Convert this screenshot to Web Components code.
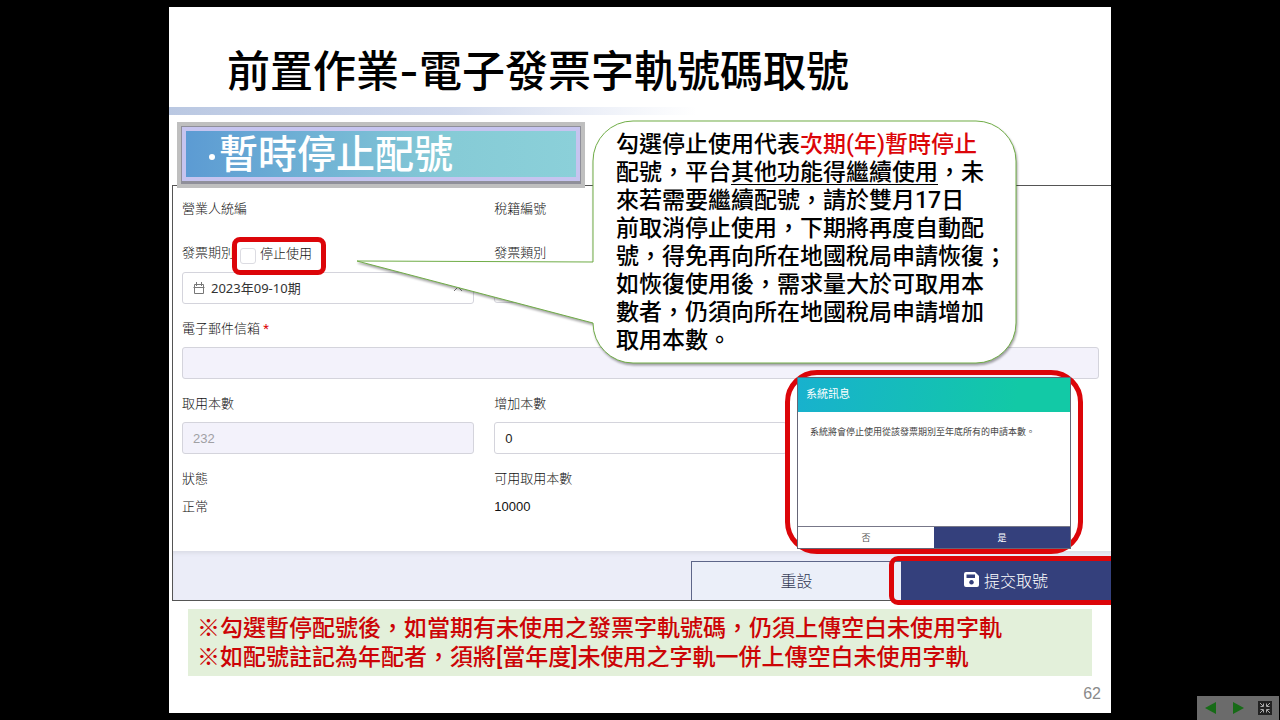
<!DOCTYPE html>
<html lang="zh-Hant">
<head>
<meta charset="utf-8">
<title>前置作業-電子發票字軌號碼取號</title>
<style>
    :root {
        --red: #dc0509;
        --navy: #34407c;
        --line: #d4d4dc;
        --sans: "Liberation Sans", "Noto Sans CJK TC", sans-serif;
        --ui: Roboto, "Noto Sans CJK TC", sans-serif;
        --display: Inter, "Noto Sans CJK TC", sans-serif;
    }

    html, body {
        height: 100%;
    }

    body {
        margin: 0;
        background: #000;
        font-family: var(--ui);
    }
</style>
</head>
<body>
<slide-page number="62">
    <span slot="title">前置作業-電子發票字軌號碼取號</span>
    <section-banner slot="banner">暫時停止配號</section-banner>
    <invoice-form slot="form"></invoice-form>
    <call-out slot="overlay">勾選停止使用代表<em>次期(年)暫時停止</em><br>配號，平台<u>其他功能得繼續使用</u>，未<br>來若需要繼續配號，請於雙月17日<br>前取消停止使用，下期將再度自動配<br>號，得免再向所在地國稅局申請恢復；<br>如恢復使用後，需求量大於可取用本<br>數者，仍須向所在地國稅局申請增加<br>取用本數。</call-out>
    <message-dialog slot="overlay">
        <span slot="heading">系統訊息</span>
        系統將會停止使用從該發票期別至年底所有的申請本數。
    </message-dialog>
    <note-box slot="notes">
        <div>※勾選暫停配號後，如當期有未使用之發票字軌號碼，仍須上傳空白未使用字軌</div>
        <div>※如配號註記為年配者，須將[當年度]未使用之字軌一併上傳空白未使用字軌</div>
    </note-box>
</slide-page>
<player-bar></player-bar>

<script>
    class BaseElement extends HTMLElement {
        constructor() {
            super();
            this.attachShadow({mode: 'open'});
            this.shadowRoot.innerHTML = this.render();
        }

        render() {
            return '<slot></slot>';
        }
    }

    class SlidePage extends BaseElement {
        static get observedAttributes() {
            return ['number'];
        }

        attributeChangedCallback(attrName, oldVal, newVal) {
            this.shadowRoot.querySelector('footer').textContent = newVal;
        }

        render() {
            return `
            <style>
                :host {
                    display: block;
                    box-sizing: border-box;
                    min-height: 100%;
                    padding: 7px 169px;
                }

                main {
                    position: relative;
                    overflow: hidden;
                    box-sizing: border-box;
                    min-height: 706px;
                    background: #fff;
                }

                h1 {
                    margin: 0;
                    padding: 32px 58px 4px;
                    font-family: var(--display);
                    font-size: 43px;
                    font-weight: 500;
                    line-height: 64px;
                }

                .rule {
                    height: 8px;
                    background: linear-gradient(to right, #bac8e2, #d3dbee 30%, #fff 56%);
                }

                .banner {
                    position: relative;
                    z-index: 1;
                    margin: 7px 0 -3px 8px;
                }

                .form {
                    margin-left: 3px;
                }

                .notes {
                    margin: 8px 19px 0;
                }

                footer {
                    padding: 8px 10px 0;
                    font-family: var(--sans);
                    font-size: 16px;
                    line-height: 20px;
                    text-align: right;
                    color: #8a8a8a;
                }
            </style>
            <main>
                <h1><slot name="title"></slot></h1>
                <div class="rule"></div>
                <div class="banner"><slot name="banner"></slot></div>
                <div class="form"><slot name="form"></slot></div>
                <div class="notes"><slot name="notes"></slot></div>
                <footer></footer>
                <slot name="overlay"></slot>
            </main>`;
        }
    }

    class SectionBanner extends BaseElement {
        render() {
            return `
            <style>
                :host {
                    display: block;
                    box-sizing: border-box;
                    width: 408px;
                    border: 4px solid #bfbfbf;
                    background: #8f8f9a;
                    padding: 1px 1px 3px;
                }

                h2 {
                    margin: 0;
                    border: 4px solid #c6c4ef;
                    padding: 2px 0 0 23px;
                    background: linear-gradient(to right, #5c9bd3, #86cbd6 68%, #8bd0d9);
                    font-size: 39px;
                    font-weight: 500;
                    line-height: 44px;
                    color: #fff;
                    display: flex;
                    align-items: center;
                    gap: 4px;
                }

                i {
                    width: 6px;
                    height: 6px;
                    margin-top: 4px;
                    border-radius: 50%;
                    background: #fff;
                }
            </style>
            <h2><i></i><slot></slot></h2>`;
        }
    }

    class FieldBox extends BaseElement {
        static get observedAttributes() {
            return ['label', 'value', 'text', 'disabled', 'required'];
        }

        attributeChangedCallback() {
            const label = this.shadowRoot.querySelector('label');
            const input = this.shadowRoot.querySelector('input');

            label.firstChild.textContent = this.getAttribute('label');
            input.value = this.getAttribute('value') || '';
            input.disabled = this.hasAttribute('disabled');
            this.shadowRoot.querySelector('output').textContent = this.getAttribute('text') || '';
        }

        render() {
            return `
            <style>
                :host {
                    display: block;
                    font-size: 13px;
                    line-height: 20px;
                    font-weight: 300;
                    color: #111;
                }

                label {
                    display: block;
                    margin-bottom: 8px;
                }

                label b {
                    display: none;
                    color: var(--red);
                    font-weight: 400;
                }

                :host([required]) label b {
                    display: inline;
                }

                input {
                    display: block;
                    box-sizing: border-box;
                    width: 100%;
                    height: 32px;
                    padding: 0 10px;
                    border: 1px solid var(--line);
                    border-radius: 3px;
                    background: #fff;
                    font: 13px var(--sans);
                    color: #222;
                }

                input:disabled {
                    background: #f3f2fb;
                    color: #a0a0a4;
                }

                output {
                    display: none;
                    font: 300 13px/20px var(--sans);
                }

                :host([text]) output {
                    display: block;
                }

                :host([text]) input,
                :host([plain]) input {
                    display: none;
                }
            </style>
            <label for="box"><span></span> <b>*</b></label>
            <input id="box">
            <output for="box"></output>`;
        }
    }

    class PeriodSelect extends BaseElement {
        render() {
            return `
            <style>
                :host {
                    display: block;
                    position: relative;
                    font-size: 13px;
                    line-height: 20px;
                    font-weight: 300;
                    color: #111;
                }

                .label {
                    display: block;
                    margin-bottom: 9px;
                }

                .box {
                    display: flex;
                    align-items: center;
                    gap: 6px;
                    box-sizing: border-box;
                    height: 32px;
                    padding: 0 10px;
                    border: 1px solid var(--line);
                    border-radius: 3px;
                }

                select {
                    flex: 1;
                    appearance: none;
                    border: 0;
                    padding: 0;
                    background: none;
                    font: 400 13px "Noto Sans", "Noto Sans CJK TC", sans-serif;
                    color: #333;
                }

                svg {
                    fill: none;
                    stroke: #777;
                }

                /* red frame that sits over the end of the label */
                .stop {
                    position: absolute;
                    left: 50px;
                    top: -6px;
                    display: flex;
                    align-items: center;
                    gap: 4px;
                    box-sizing: border-box;
                    width: 94px;
                    height: 38px;
                    padding: 0 0 5px 3px;
                    border: 5px solid var(--red);
                    border-radius: 8px;
                    background: #fff;
                }

                .stop input {
                    appearance: none;
                    box-sizing: border-box;
                    width: 16px;
                    height: 16px;
                    margin: 4px 0 0;
                    border: 1px solid #dcdce2;
                    border-radius: 3px;
                }
            </style>
            <label class="label" for="period">發票期別</label>
            <div class="box">
                <svg width="12" height="13" viewBox="0 0 12 13"><path d="M1.500 2.500h9v9h-9zM.5 5.500h11M3.500 0v4M8.500 0v4"/></svg>
                <select id="period"><option>2023年09-10期</option></select>
                <svg width="10" height="8" viewBox="0 0 10 8"><path d="M1 7l4-4 4 4"/></svg>
            </div>
            <label class="stop"><input type="checkbox">停止使用</label>`;
        }
    }

    class InvoiceForm extends BaseElement {
        render() {
            return `
            <style>
                :host {
                    display: block;
                    border: 1px solid #555;
                    border-right: 0;
                }

                .grid {
                    display: grid;
                    grid-template-columns: repeat(3, 1fr);
                    column-gap: 20px;
                    padding: 13px 12px 34px 9px;
                }

                .wide {
                    grid-column: 1 / -1;
                }

                .row1 {
                    height: 44px;
                }

                .row2 {
                    height: 76px;
                }

                .row3 {
                    height: 75px;
                }

                .bar {
                    position: relative;
                    display: flex;
                    justify-content: flex-end;
                    box-sizing: border-box;
                    height: 49px;
                    padding-top: 10px;
                    background: #ebedf8;
                    box-shadow: inset 0 4px 4px -2px #d9dae4;
                }

                button {
                    display: flex;
                    align-items: center;
                    justify-content: center;
                    gap: 5px;
                    width: 210px;
                    border: 0;
                    padding: 0 0 2px;
                    font: 300 16px var(--ui);
                }

                .reset {
                    border: solid #5d6689;
                    border-width: 1px 0 0 1px;
                    background: #ebeff9;
                    color: #333a55;
                }

                .submit {
                    background: var(--navy);
                    color: #fff;
                }

                .mark {
                    position: absolute;
                    right: -8px;
                    top: 5px;
                    box-sizing: border-box;
                    width: 230px;
                    height: 49px;
                    border: 5px solid var(--red);
                    border-radius: 9px;
                    pointer-events: none;
                }
            </style>
            <form>
                <div class="grid">
                    <field-box class="row1" label="營業人統編" plain></field-box>
                    <field-box class="row1" label="稅籍編號" plain></field-box>
                    <span></span>
                    <period-select class="row2"></period-select>
                    <field-box class="row2" label="發票類別"></field-box>
                    <span></span>
                    <field-box class="row3 wide" label="電子郵件信箱" required disabled></field-box>
                    <field-box class="row3" label="取用本數" value="232" disabled></field-box>
                    <field-box class="row3" label="增加本數" value="0"></field-box>
                    <span></span>
                    <field-box label="狀態" text="正常"></field-box>
                    <field-box label="可用取用本數" text="10000"></field-box>
                </div>
                <div class="bar">
                    <button class="reset" type="reset">重設</button>
                    <button class="submit" type="button">
                        <svg width="15" height="15" viewBox="0 0 15 15"><path fill="#fff" fill-rule="evenodd" d="M2 0h9l4 4v9a2 2 0 0 1-2 2H2a2 2 0 0 1-2-2V2a2 2 0 0 1 2-2zM2.500 2.500v3.500h8.500V2.500zM7.500 8a2.300 2.300 0 1 0 .01 0z"/></svg>
                        提交取號
                    </button>
                    <div class="mark"></div>
                </div>
            </form>`;
        }
    }

    class CallOut extends BaseElement {
        render() {
            return `
            <style>
                :host {
                    position: absolute;
                    z-index: 2;
                    left: 187px;
                    top: 113px;
                    width: 662px;
                    box-sizing: border-box;
                    padding: 11px 0 20px 260px;
                    font-size: 23px;
                    font-weight: 500;
                    line-height: 28px;
                    white-space: nowrap;
                    color: #000;
                }

                svg {
                    position: absolute;
                    left: 0;
                    top: 0;
                    overflow: visible;
                    filter: drop-shadow(1px 2px 1px rgba(0,0,0, 0.35));
                }

                div {
                    position: relative;
                }

                ::slotted(em) {
                    font-style: normal;
                    color: var(--red);
                }

                ::slotted(u) {
                    text-decoration-thickness: 1px;
                    text-underline-offset: 4px;
                }
            </style>
            <svg width="662" height="246" viewBox="0 0 662 246">
                <path fill="#fff" stroke="#70ad47" d="M237 41A40 40 0 0 1 277 1H620A40 40 0 0 1 660 41V203A40 40 0 0 1 620 243H277A40 40 0 0 1 237 203L1 141L237 142Z"/>
            </svg>
            <div><slot></slot></div>`;
        }
    }

    class MessageDialog extends BaseElement {
        render() {
            return `
            <style>
                :host {
                    position: absolute;
                    z-index: 2;
                    right: 28px;
                    top: 363px;
                    display: block;
                    box-sizing: border-box;
                    width: 298px;
                    height: 184px;
                    padding: 2px 7px;
                    border: 5px solid var(--red);
                    border-radius: 32px;
                }

                /* the window's square corners run under the red frame */
                section {
                    display: flex;
                    flex-direction: column;
                    box-sizing: border-box;
                    width: 274px;
                    height: 172px;
                    border: 1px solid #667;
                    background: #fff;
                }

                h3 {
                    margin: 0;
                    padding: 0 8px;
                    background: linear-gradient(100deg, #18b1ce, #12c9a6 80%);
                    font-size: 11px;
                    font-weight: 400;
                    line-height: 34px;
                    color: #fff;
                }

                p {
                    flex: 1;
                    margin: 0;
                    padding: 12px 12px 0;
                    font-size: 9px;
                    line-height: 16px;
                    white-space: nowrap;
                    color: #444;
                }

                .actions {
                    display: grid;
                    grid-template-columns: 1fr 1fr;
                    height: 21px;
                    border-top: 1px solid #778;
                }

                button {
                    border: 0;
                    padding: 0;
                    background: #fff;
                    font: 9px var(--ui);
                    color: #555;
                }

                button.yes {
                    background: var(--navy);
                    color: #fff;
                }
            </style>
            <section>
                <h3><slot name="heading"></slot></h3>
                <p><slot></slot></p>
                <div class="actions">
                    <button>否</button>
                    <button class="yes">是</button>
                </div>
            </section>`;
        }
    }

    class NoteBox extends BaseElement {
        render() {
            return `
            <style>
                :host {
                    display: block;
                    padding: 5px 9px 4px;
                    background: #e3f0da;
                    font-size: 23px;
                    font-weight: 500;
                    line-height: 29px;
                    white-space: nowrap;
                    color: #cc0406;
                }
            </style>
            <slot></slot>`;
        }
    }

    class PlayerBar extends BaseElement {
        render() {
            return `
            <style>
                :host {
                    position: fixed;
                    right: 1px;
                    bottom: 0;
                    display: flex;
                    box-sizing: border-box;
                    width: 82px;
                    height: 24px;
                    background: #6b6b6b;
                }

                button {
                    flex: 1;
                    display: flex;
                    align-items: center;
                    justify-content: center;
                    border: 0;
                    padding: 0;
                    background: none;
                }
            </style>
            <button aria-label="previous"><svg width="12" height="14"><path fill="#176b17" d="M11 1v12L0 7z"/></svg></button>
            <button aria-label="next"><svg width="12" height="14"><path fill="#176b17" d="M1 1v12l11-6z"/></svg></button>
            <button aria-label="exit full screen"><svg width="14" height="14"><path fill="#222" d="M0 0h14v14H0z"/><path fill="none" stroke="#aaa" d="M2 2l3 3M5.500 2.500v3h-3M12 2L9 5M8.500 2.500v3h3M2 12l3-3M5.500 11.500v-3h-3M12 12L9 9M8.500 11.500v-3h3"/></svg></button>`;
        }
    }

    window.customElements.define('slide-page', SlidePage);
    window.customElements.define('section-banner', SectionBanner);
    window.customElements.define('field-box', FieldBox);
    window.customElements.define('period-select', PeriodSelect);
    window.customElements.define('invoice-form', InvoiceForm);
    window.customElements.define('call-out', CallOut);
    window.customElements.define('message-dialog', MessageDialog);
    window.customElements.define('note-box', NoteBox);
    window.customElements.define('player-bar', PlayerBar);
</script>
</body>
</html>
